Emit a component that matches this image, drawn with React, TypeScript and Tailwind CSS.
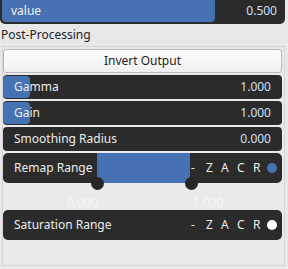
import React from "react";

const font = { fontFamily: '"Noto Sans", "Open Sans", sans-serif' };

function Slider({ label, value, fill }: { label: string; value: string; fill: number }) {
  return (
    <div className="relative h-[24px] rounded-[4px] bg-[#2b2b2b] flex items-center">
      <div className="absolute left-0 top-[1px] bottom-[1px] rounded-[4px] bg-[#4672b4]" style={{ width: fill }} />
      <span className="relative pl-[11px] text-[12px] text-[#ececec]">{label}</span>
      <span className="relative ml-auto pr-[11px] text-[12px] text-[#cfe0f5]">{value}</span>
    </div>
  );
}

function Flags({ dot }: { dot: string }) {
  return (
    <div className="relative ml-auto flex items-center pr-[5px] text-[12px] text-[#ececec]">
      <span className="w-[15px]">-</span>
      <span className="w-[15px]">Z</span>
      <span className="w-[16px]">A</span>
      <span className="w-[16px]">C</span>
      <span className="w-[14px]">R</span>
      <span className={`w-[10px] h-[10px] rounded-full ${dot}`} />
    </div>
  );
}

export default function App() {
  return (
    <div className="w-[288px] h-[269px] bg-[#e8e8e8] relative overflow-hidden" style={font}>
      <div className="w-[285px] h-[24px] rounded-b-[5px] bg-[#2b2b2b] p-[2px] pt-0 flex">
        <div className="relative flex-1 flex items-center">
          <div className="absolute left-0 top-0 bottom-0 w-[213px] rounded-b-[4px] bg-[#4672b4]" />
          <span className="relative pl-[9px] text-[12px] text-[#f0f0f0]">value</span>
          <span className="relative ml-auto pr-[6px] text-[12px] text-[#cfe0f5]">0.500</span>
        </div>
      </div>
      <div className="pl-[1px] h-[22px] flex items-center text-[12px] text-[#1e1e1e]">Post-Processing</div>
      <div className="ml-[2px] w-[283px] h-[220px] border border-[#d4d4d4] bg-[#eaeaea] pt-[2px] flex flex-col">
        <div className="w-[279px] h-[24px] rounded-[3px] border border-[#b8b8b8] bg-gradient-to-b from-[#fdfdfd] to-[#f0f0f0] flex items-center justify-center text-[12px] text-[#1e1e1e]">
          Invert Output
        </div>
        <div className="mt-[2px] w-[279px] flex flex-col gap-[2px]">
          <Slider label="Gamma" value="1.000" fill={27} />
          <Slider label="Gain" value="1.000" fill={27} />
          <Slider label="Smoothing Radius" value="0.000" fill={0} />
          <div className="relative h-[30px] rounded-[5px] bg-[#2b2b2b] flex items-center">
            <div className="absolute left-[94px] top-0 bottom-0 w-[93px] bg-[#4672b4]" />
            <span className="relative pl-[11px] text-[12px] text-[#ececec]">Remap Range</span>
            <Flags dot="bg-[#4672b4]" />
            <div className="absolute left-[88px] top-[24px] w-[13px] h-[13px] rounded-full bg-[#262626]" />
            <div className="absolute left-[182px] top-[24px] w-[13px] h-[13px] rounded-full bg-[#262626]" />
          </div>
          <div className="h-[23px] flex items-center text-[12px] text-[#f7f7f7] pt-[13px]">
            <span className="ml-[64px]">0.000</span>
            <span className="ml-[95px]">1.000</span>
          </div>
          <div className="h-[30px] rounded-[5px] bg-[#2b2b2b] flex items-center">
            <span className="pl-[11px] text-[12px] text-[#ececec]">Saturation Range</span>
            <Flags dot="bg-[#ffffff]" />
          </div>
        </div>
      </div>
    </div>
  );
}
